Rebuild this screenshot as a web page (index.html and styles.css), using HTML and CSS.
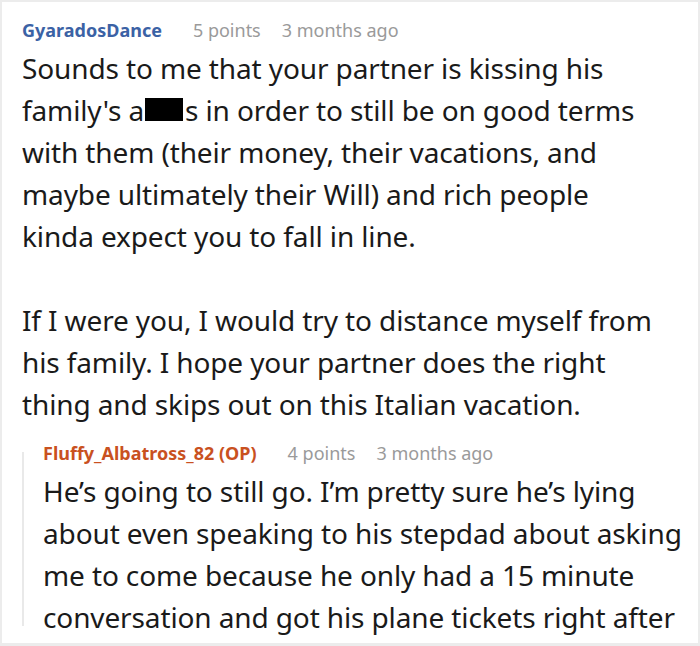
FILE: index.html
```html
<!DOCTYPE html>
<html>
<head>
<meta charset="utf-8">
<link rel="stylesheet" href="styles.css">
</head>
<body>
<div class="comment">
  <div class="meta">
    <span class="user">GyaradosDance</span>
    <span class="info">5 points</span>
    <span class="info">3 months ago</span>
  </div>
  <div class="text main">
    <p>Sounds to me that your partner is kissing his family's a<span class="redact"></span>s in order to still be on good terms with them (their money, their vacations, and maybe ultimately their Will) and rich people kinda expect you to fall in line.</p>
    <p>If I were you, I would try to distance myself from his family. I hope your partner does the right thing and skips out on this Italian vacation.</p>
  </div>
  <div class="reply">
    <div class="meta">
      <span class="user op">Fluffy_Albatross_82 (OP)</span>
      <span class="info">4 points</span>
      <span class="info">3 months ago</span>
    </div>
    <div class="text">
      <p>He’s going to still go. I’m pretty sure he’s lying about even speaking to his stepdad about asking me to come because he only had a 15 minute conversation and got his plane tickets right after</p>
    </div>
  </div>
</div>
</body>
</html>
```
FILE: styles.css
```css
html, body {
  margin: 0;
  padding: 0;
  background: #fff;
}
.comment {
  box-sizing: border-box;
  width: 700px;
  height: 646px;
  overflow: hidden;
  border: 2px solid #ececec;
  border-bottom-width: 3px;
  padding: 11px 8px 0 20px;
  font-family: "Noto Sans", sans-serif;
}
.meta {
  display: flex;
  font-size: 18px;
  line-height: 34px;
  height: 34px;
  white-space: nowrap;
}
.user {
  font-weight: bold;
  color: #3b62a5;
  margin-right: 31px;
}
.user.op {
  color: #c9511f;
}
.info {
  color: #9a9a9a;
  margin-right: 21px;
}
.text {
  font-size: 28px;
  letter-spacing: -0.12px;
  line-height: 42px;
  color: #1a1a1a;
}
.text.main {
  margin-right: 30px;
}
.text p {
  margin: 0 0 42px 0;
}
.text p:last-child {
  margin-bottom: 0;
}
.redact {
  display: inline-block;
  width: 38px;
  height: 23px;
  background: #000;
  margin: 0 2px 0 1px;
  vertical-align: baseline;
}
.reply {
  position: relative;
  margin-top: 11px;
  padding-left: 21px;
}
.reply::before {
  content: "";
  position: absolute;
  left: 0;
  top: 16px;
  bottom: 12px;
  width: 2px;
  background: #e9e9e9;
}
```
